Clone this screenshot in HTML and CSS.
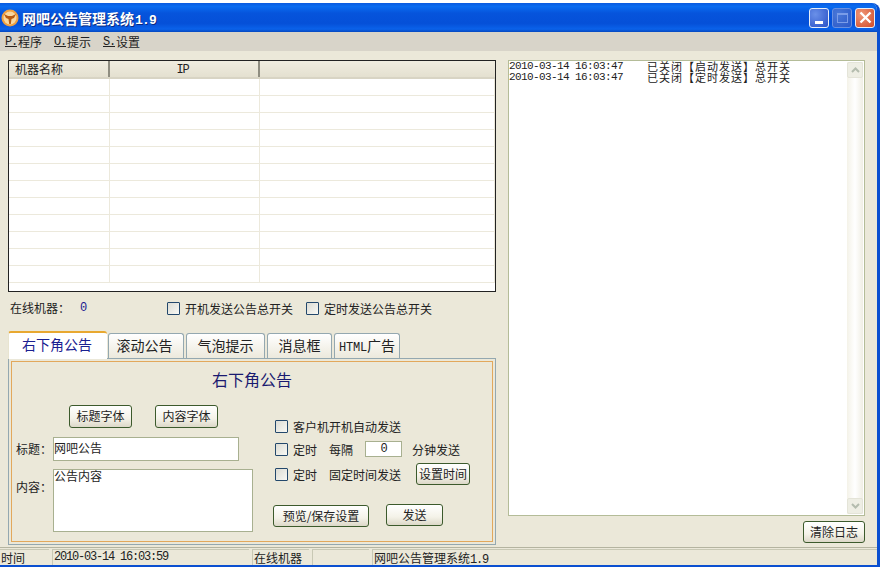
FILE: index.html
```html
<!DOCTYPE html>
<html lang="zh-CN">
<head>
  <meta charset="UTF-8">
  <title>网吧公告管理系统1.9</title>
  <link rel="stylesheet" href="styles.css">
</head>
<body>
  <div class="window">
    <!-- 标题栏 -->
    <div class="titlebar">
      <svg class="app-icon" width="18" height="18" viewBox="0 0 18 18">
        <circle cx="9" cy="9" r="8.5" fill="#f0a040"/>
        <circle cx="9" cy="9" r="6.5" fill="#f8d8a0"/>
        <path d="M3 5 L7 7 H11 L15 5 L13 9 L10.5 10 L9.8 15 H8.2 L7.5 10 L5 9 Z" fill="#b85a10"/>
      </svg>
      <span class="app-title">网吧公告管理系统<span class="title-ver">1.9</span></span>
      <div class="win-btns">
        <div class="win-btn btn-min"><span class="min-bar"></span></div>
        <div class="win-btn btn-max"><span class="max-box"></span></div>
        <div class="win-btn btn-close">
          <svg width="13" height="13" viewBox="0 0 13 13"><path d="M1.5 1.5 L11.5 11.5 M11.5 1.5 L1.5 11.5" stroke="#fff" stroke-width="2.4"/></svg>
        </div>
      </div>
    </div>

    <!-- 菜单 -->
    <div class="menubar">
      <span class="menu-item"><u class="latin">P.</u>程序</span>
      <span class="menu-item"><u class="latin">O.</u>提示</span>
      <span class="menu-item"><u class="latin">S.</u>设置</span>
    </div>

    <div class="content">
      <div class="left">
        <div class="list-box">
          <table class="machines">
            <thead>
              <tr><th class="col-name">机器名称</th><th class="col-ip"><span class="latin">IP</span></th><th></th></tr>
            </thead>
            <tbody>
              <tr><td></td><td></td><td></td></tr>
              <tr><td></td><td></td><td></td></tr>
              <tr><td></td><td></td><td></td></tr>
              <tr><td></td><td></td><td></td></tr>
              <tr><td></td><td></td><td></td></tr>
              <tr><td></td><td></td><td></td></tr>
              <tr><td></td><td></td><td></td></tr>
              <tr><td></td><td></td><td></td></tr>
              <tr><td></td><td></td><td></td></tr>
              <tr><td></td><td></td><td></td></tr>
              <tr><td></td><td></td><td></td></tr>
              <tr><td></td><td></td><td></td></tr>
            </tbody>
          </table>
        </div>

        <div class="online-row">
          <span class="online-label">在线机器：</span>
          <span class="online-count latin">0</span>
          <label class="check master-1"><i class="box"></i>开机发送公告总开关</label>
          <label class="check master-2"><i class="box"></i>定时发送公告总开关</label>
        </div>

        <div class="tabs">
          <div class="tab active">右下角公告</div>
          <div class="tab tab-2">滚动公告</div>
          <div class="tab tab-3">气泡提示</div>
          <div class="tab tab-4">消息框</div>
          <div class="tab tab-5"><span class="latin">HTML</span>广告</div>
        </div>

        <div class="tab-panel">
          <div class="panel-inner">
            <div class="panel-title">右下角公告</div>
            <div class="panel-cols">
              <div class="form-col">
                <div class="font-btns">
                  <div class="btn btn-font">标题字体</div>
                  <div class="btn btn-font">内容字体</div>
                </div>
                <div class="field field-title">
                  <span class="field-label">标题：</span>
                  <div class="text-input title-input">网吧公告</div>
                </div>
                <div class="field field-body">
                  <span class="field-label">内容：</span>
                  <div class="text-input body-input">公告内容</div>
                </div>
              </div>
              <div class="opt-col">
                <label class="check opt-1"><i class="box"></i>客户机开机自动发送</label>
                <div class="opt-row opt-2">
                  <label class="check"><i class="box"></i>定时</label>
                  <span class="gap-a">每隔</span>
                  <div class="text-input num-input latin">0</div>
                  <span>分钟发送</span>
                </div>
                <div class="opt-row opt-3">
                  <label class="check"><i class="box"></i>定时</label>
                  <span class="gap-a">固定时间发送</span>
                  <div class="btn btn-time">设置时间</div>
                </div>
                <div class="action-row">
                  <div class="btn btn-save">预览/保存设置</div>
                  <div class="btn btn-send">发送</div>
                </div>
              </div>
            </div>
          </div>
        </div>
      </div>

      <div class="right">
        <div class="log-box">
          <div class="log-lines">
            <div class="log-line"><span class="log-time latin">2010-03-14 16:03:47</span><span class="log-msg">已关闭【启动发送】总开关</span></div>
            <div class="log-line"><span class="log-time latin">2010-03-14 16:03:47</span><span class="log-msg">已关闭【定时发送】总开关</span></div>
          </div>
          <div class="scrollbar">
            <div class="scroll-btn"><svg width="9" height="6" viewBox="0 0 9 6"><path d="M1 5 L4.5 1.5 L8 5" fill="none" stroke="#b4bcae" stroke-width="2"/></svg></div>
            <div class="scroll-btn"><svg width="9" height="6" viewBox="0 0 9 6"><path d="M1 1 L4.5 4.5 L8 1" fill="none" stroke="#b4bcae" stroke-width="2"/></svg></div>
          </div>
        </div>
        <div class="log-actions"><div class="btn btn-clear">清除日志</div></div>
      </div>
    </div>

    <!-- 状态栏 -->
    <div class="statusbar">
      <div class="cell cell-1">时间</div>
      <div class="cell cell-2 latin">2010-03-14 16:03:59</div>
      <div class="cell cell-3">在线机器</div>
      <div class="cell cell-4"></div>
      <div class="cell cell-5">网吧公告管理系统<span class="latin">1.9</span></div>
    </div>
  </div>
</body>
</html>
```

FILE: styles.css
```css
* {
  box-sizing: border-box;
  margin: 0;
  padding: 0;
}
html, body {
  width: 880px;
  height: 567px;
  overflow: hidden;
}
body {
  background: #fff;
  font-family: "Noto Sans CJK SC", "Liberation Sans", sans-serif;
  font-size: 12px;
  color: #222;
}
.latin {
  font-family: "Liberation Mono", monospace;
  font-size: 12px;
  letter-spacing: -1.2px;
}
.window {
  height: 564px;
  margin-top: 3px;
  background: #ebe8d9;
  border-right: 3px solid #0a4fd0;
  border-bottom: 2px solid #0a4fd0;
  display: flex;
  flex-direction: column;
  border-radius: 0 8px 0 0;
  overflow: hidden;
}

/* title bar */
.titlebar {
  height: 29px;
  flex: none;
  display: flex;
  align-items: center;
  padding-left: 1px;
  background: linear-gradient(180deg, #0a5ae0 0%, #0a6cf0 12%, #0654dc 35%, #0550d8 70%, #0a62ea 90%, #0548c0 100%);
}
.app-icon {
  margin-right: 3px;
}
.app-title {
  color: #fff;
  font-size: 14px;
  font-weight: bold;
  text-shadow: 1px 1px 0 #0a2a80;
}
.title-ver {
  font-family: "Liberation Mono", monospace;
  font-size: 13px;
  letter-spacing: -0.8px;
  margin-left: 1px;
}
.win-btns {
  margin-left: auto;
  margin-right: 2px;
  display: flex;
  gap: 3px;
}
.win-btn {
  width: 20px;
  height: 20px;
  border: 1px solid #e8eef8;
  border-radius: 3px;
  display: flex;
  align-items: center;
  justify-content: center;
}
.btn-min {
  background: radial-gradient(circle at 30% 30%, #6a90e8, #2a52c8);
  align-items: flex-end;
  padding-bottom: 3px;
}
.min-bar {
  width: 8px;
  height: 3px;
  background: #fff;
}
.btn-max {
  background: radial-gradient(circle at 30% 30%, #4a78d8, #2a58c8);
  border-color: #6a90e0;
}
.max-box {
  width: 11px;
  height: 10px;
  border: 1px solid #7a9ce8;
  border-top-width: 2px;
}
.btn-close {
  background: radial-gradient(circle at 30% 30%, #f09878, #d04a28);
}

/* menu */
.menubar {
  height: 19px;
  flex: none;
  background: #d8d4c9;
  display: flex;
  align-items: center;
  padding-left: 5px;
  gap: 12px;
}
.menu-item {
  display: flex;
  align-items: center;
  gap: 1px;
  width: 37px;
  white-space: nowrap;
}

.content {
  flex: 1;
  display: flex;
  min-height: 0;
}
.left {
  width: 488px;
  margin-left: 8px;
  padding-top: 9px;
}

/* machine list */
.list-box {
  height: 232px;
  background: #fff;
  border: 1px solid #222;
  overflow: hidden;
}
.machines {
  width: 100%;
  table-layout: fixed;
  border-collapse: collapse;
}
.machines th {
  height: 16px;
  font-weight: normal;
  background: linear-gradient(180deg, #f0ede0, #e4e0d0);
  border-right: 2px solid #8f8d80;
  border-bottom: 2px solid #d8d4c4;
  text-align: left;
  padding-left: 6px;
  line-height: 14px;
}
.machines th:last-child {
  border-right: none;
}
.col-name {
  width: 100px;
}
.col-ip {
  width: 150px;
}
.machines th.col-ip {
  text-align: center;
  padding: 0 3px 0 0;
}
.machines td {
  height: 17px;
  border-right: 1px solid #ece9dc;
  border-bottom: 1px solid #ece9dc;
}

.online-row {
  height: 32px;
  display: flex;
  align-items: center;
  padding: 0 0 0 2px;
}
.online-count {
  color: #1a1a90;
  margin-left: 10px;
  width: 87px;
}
.online-label {
  width: 60px;
  margin-top: -2px;
  white-space: nowrap;
}
.check {
  display: flex;
  align-items: center;
  white-space: nowrap;
}
.box {
  width: 13px;
  height: 13px;
  flex: none;
  margin-right: 5px;
  border: 1px solid #23486c;
  border-radius: 1px;
  background: linear-gradient(135deg, #dcdcd4, #f8f8f4);
}
.master-1 {
  margin-right: 13px;
}

/* tabs */
.tabs {
  margin-top: 7px;
  height: 27px;
  display: flex;
  align-items: flex-end;
  gap: 2px;
}
.tab {
  height: 25px;
  font-size: 14px;
  color: #222;
  text-align: center;
  line-height: 22px;
  border: 1px solid #94a8b0;
  border-bottom: none;
  border-radius: 3px 3px 0 0;
  background: linear-gradient(180deg, #fff, #ece9dc);
  white-space: nowrap;
}
.tab .latin {
  font-size: 12px;
  letter-spacing: -0.2px;
}
.tab.active {
  width: 99px;
  height: 28px;
  position: relative;
  top: 1px;
  margin-right: -1px;
  padding-right: 2px;
  color: #1a2090;
  background: #fff;
  border: none;
  border-top: 2px solid #e8a830;
  border-left: 1px solid #e8e4d0;
  z-index: 1;
}
.tab-2 { width: 76px; padding-right: 3px; }
.tab-3 { width: 79px; }
.tab-4 { width: 65px; }
.tab-5 { width: 66px; }

.tab-panel {
  height: 187px;
  border: 1px solid #94a8b0;
  padding: 2px;
}
.panel-inner {
  height: 181px;
  border: 1px solid #e2a85c;
}
.panel-title {
  height: 34px;
  line-height: 34px;
  text-align: center;
  font-size: 16px;
  color: #1a1a70;
}
.panel-cols {
  display: flex;
}

.btn {
  border: 1px solid #3c5a2c;
  border-radius: 3px;
  background: linear-gradient(180deg, #fff 0%, #f4f2e8 60%, #dcd8c8 100%);
  display: flex;
  align-items: center;
  justify-content: center;
  white-space: nowrap;
  padding-bottom: 2px;
}
.form-col {
  width: 261px;
  padding: 9px 0 0 4px;
}
.font-btns {
  display: flex;
  gap: 23px;
  padding-left: 53px;
}
.btn-font {
  width: 63px;
  height: 23px;
}
.field {
  display: flex;
  align-items: center;
}
.field-title {
  margin-top: 9px;
}
.field-title .field-label {
  margin-top: -2px;
}
.field-body {
  margin-top: 8px;
  align-items: flex-start;
}
.field-body .field-label {
  margin-top: 9px;
}
.field-label {
  width: 37px;
  font-size: 12px;
  white-space: nowrap;
}
.text-input {
  background: #fff;
  border: 1px solid #a8b090;
  line-height: 14px;
  padding: 3px 0 0 0;
}
.title-input {
  width: 186px;
  height: 24px;
}
.body-input {
  width: 200px;
  height: 63px;
  line-height: 12px;
  padding-top: 0;
}
.opt-col {
  flex: 1;
  padding-top: 22px;
}
.opt-1 {
  height: 16px;
  margin-left: 2px;
}
.opt-row {
  display: flex;
  align-items: center;
  margin-left: 2px;
}
.opt-2 {
  height: 16px;
  margin-top: 7px;
}
.opt-3 {
  height: 22px;
  margin-top: 6px;
}
.gap-a {
  margin-left: 12px;
}
.num-input {
  width: 37px;
  height: 16px;
  line-height: 14px;
  padding: 0;
  text-align: center;
  margin: 0 10px 0 12px;
}
.btn-time {
  width: 54px;
  height: 22px;
  margin-left: 15px;
}
.action-row {
  display: flex;
  align-items: flex-start;
  margin-top: 19px;
  gap: 17px;
}
.btn-save {
  width: 96px;
  height: 22px;
  margin-top: 1px;
}
.btn-send {
  width: 57px;
  height: 22px;
}

/* log */
.right {
  width: 357px;
  margin-left: 12px;
  padding-top: 9px;
}
.log-box {
  height: 456px;
  background: #fff;
  border: 1px solid #b4bc98;
  display: flex;
}
.log-lines {
  flex: 1;
}
.log-line {
  height: 11px;
  line-height: 11px;
  display: flex;
  white-space: nowrap;
}
.log-time {
  width: 138px;
  font-size: 11px;
  letter-spacing: -0.6px;
}
.log-msg {
  font-size: 11px;
  letter-spacing: 1px;
}
.scrollbar {
  width: 16px;
  flex: none;
  margin: 1px 1px 1px 0;
  background: linear-gradient(90deg, #f4f2e8, #fff 50%, #f0eee4);
  display: flex;
  flex-direction: column;
  justify-content: space-between;
}
.scroll-btn {
  height: 16px;
  border: 1px solid #e4e4d8;
  border-radius: 2px;
  background: #eeeee4;
  display: flex;
  align-items: center;
  justify-content: center;
}
.log-actions {
  display: flex;
  justify-content: flex-end;
  margin-top: 5px;
}
.btn-clear {
  width: 62px;
  height: 22px;
}

/* status bar */
.statusbar {
  height: 18px;
  flex: none;
  display: flex;
  gap: 3px;
  border-top: 1px solid #b4b4a0;
  padding-top: 1px;
}
.cell {
  height: 16px;
  line-height: 15px;
  border-left: 1px solid #c8c8b4;
  border-top: 1px solid #c8c8b4;
  white-space: nowrap;
  padding-left: 1px;
}
.cell-1 { width: 49px; border-left: none; }
.cell-2 { width: 197px; }
.cell-3 { width: 57px; }
.cell-4 { width: 57px; }
.cell-5 { flex: 1; }
```
